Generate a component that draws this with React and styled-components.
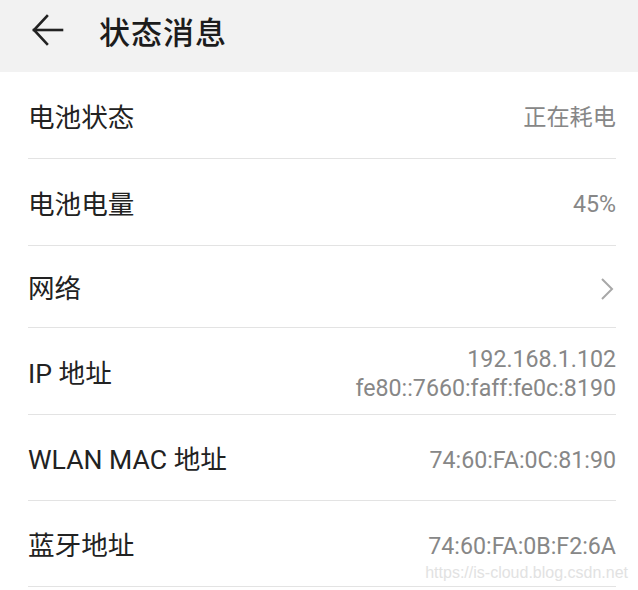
import React from 'react';
import styled, { createGlobalStyle } from 'styled-components';

const rows = [
	{ label: '电池状态', value: ['正在耗电'] },
	{ label: '电池电量', value: ['45%'] },
	{ label: '网络', arrow: true, height: 82 },
	{ label: 'IP 地址', value: ['192.168.1.102', 'fe80::7660:faff:fe0c:8190'] },
	{ label: 'WLAN MAC 地址', value: ['74:60:FA:0C:81:90'], height: 86 },
	{ label: '蓝牙地址', value: ['74:60:FA:0B:F2:6A'], height: 86 },
];

const App = () => {
	return (
		<>
			<GlobalStyle />
			<Page>
				<Header>
					<BackButton>
						<svg width="34" height="34" viewBox="0 0 34 34" fill="none" stroke="#222" strokeWidth="2.6" strokeLinecap="square">
							<path d="M3 17 H31" />
							<path d="M16 3 L3 17 L16 31" />
						</svg>
					</BackButton>
					<Title>状态消息</Title>
				</Header>
				<List>
					{rows.map((row) => (
						<Row key={row.label} $height={row.height}>
							<Label>{row.label}</Label>
							{row.arrow ? (
								<Chevron width="14" height="24" viewBox="0 0 14 24" fill="none" stroke="#a8a8a8" strokeWidth="2">
									<path d="M2 2 L12 12 L2 22" />
								</Chevron>
							) : (
								<Value>
									{row.value.map((line) => (
										<span key={line}>{line}</span>
									))}
								</Value>
							)}
						</Row>
					))}
				</List>
				<Watermark>https://is-cloud.blog.csdn.net</Watermark>
			</Page>
		</>
	);
};

export default App;

// Styles

const GlobalStyle = createGlobalStyle`
	body {
		margin: 0;
		background: #fff;
		font-family: Roboto, 'Noto Sans CJK SC', sans-serif;
	}
`;

const Page = styled.div`
	position: relative;
	width: 638px;
	height: 590px;
	overflow: hidden;
	background: #fff;
`;

const Header = styled.div`
	height: 72px;
	background-color: #f2f2f2;
	display: flex;
	align-items: center;
	padding-left: 31px;
	padding-bottom: 12px;
	box-sizing: border-box;
`;

const BackButton = styled.div`
	width: 34px;
	height: 34px;
	display: flex;
	align-items: center;
	margin-right: 34px;
`;

const Title = styled.h1`
	margin: 0;
	font-family: 'Noto Sans CJK SC', sans-serif;
	font-size: 31px;
	font-weight: 500;
	color: #1c1c1c;
	letter-spacing: 1px;
`;

const List = styled.div`
	margin: 0 22px 0 28px;
	display: flex;
	flex-direction: column;
`;

const Row = styled.div`
	height: ${(p) => p.$height || 87}px;
	box-sizing: border-box;
	padding-top: 5px;
	border-bottom: 1px solid #e3e3e3;
	display: flex;
	align-items: center;
	justify-content: space-between;
`;

const Label = styled.div`
	font-size: 26.6px;
	color: #222;
	line-height: 1.2;
`;

const Value = styled.div`
	display: flex;
	flex-direction: column;
	align-items: flex-end;
	font-size: 23.2px;
	line-height: 29px;
	color: #878787;
`;

const Chevron = styled.svg`
	margin-right: 2px;
`;

const Watermark = styled.div`
	position: absolute;
	right: 10px;
	bottom: 8px;
	font-family: Arial, 'Liberation Sans', sans-serif;
	font-size: 16px;
	color: #e2e2e2;
`;
